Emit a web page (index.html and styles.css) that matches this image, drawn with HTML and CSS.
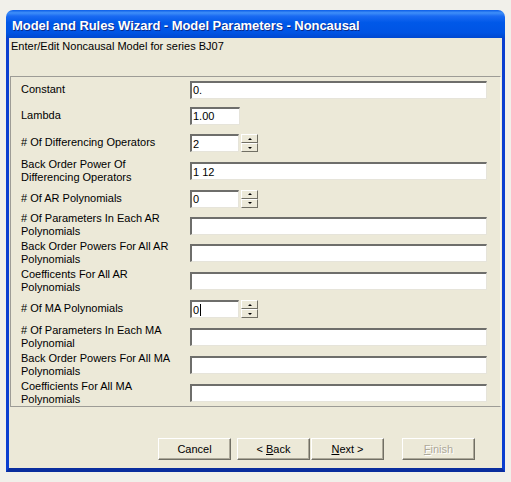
FILE: index.html
```html
<!DOCTYPE html>
<html>
<head>
<meta charset="utf-8">
<title>Model and Rules Wizard</title>
<link rel="stylesheet" href="styles.css">
</head>
<body>
<div class="window">
  <div class="titlebar"><span class="title">Model and Rules Wizard - Model Parameters - Noncausal</span></div>
  <div class="client">
    <div class="subtitle">Enter/Edit Noncausal Model for series BJ07</div>
    <div class="panel">
      <div class="grid">
        <div class="label">Constant</div>
        <div class="cell"><div class="field wide">0.</div></div>

        <div class="label">Lambda</div>
        <div class="cell"><div class="field short">1.00</div></div>

        <div class="label"># Of Differencing Operators</div>
        <div class="cell"><div class="field spin">2</div><div class="spinner"><div class="sbtn"><span class="up"></span></div><div class="sbtn"><span class="down"></span></div></div></div>

        <div class="label">Back Order Power Of<br>Differencing Operators</div>
        <div class="cell"><div class="field wide">1 12</div></div>

        <div class="label"># Of AR Polynomials</div>
        <div class="cell"><div class="field spin">0</div><div class="spinner"><div class="sbtn"><span class="up"></span></div><div class="sbtn"><span class="down"></span></div></div></div>

        <div class="label"># Of Parameters In Each AR<br>Polynomials</div>
        <div class="cell"><div class="field wide"></div></div>

        <div class="label">Back Order Powers For All AR<br>Polynomials</div>
        <div class="cell"><div class="field wide"></div></div>

        <div class="label">Coefficents For All AR<br>Polynomials</div>
        <div class="cell"><div class="field wide"></div></div>

        <div class="label"># Of MA Polynomials</div>
        <div class="cell"><div class="field spin"><span>0</span><span class="caret"></span></div><div class="spinner"><div class="sbtn"><span class="up"></span></div><div class="sbtn"><span class="down"></span></div></div></div>

        <div class="label"># Of Parameters In Each MA<br>Polynomial</div>
        <div class="cell"><div class="field wide"></div></div>

        <div class="label">Back Order Powers For All MA<br>Polynomials</div>
        <div class="cell"><div class="field wide"></div></div>

        <div class="label">Coefficients For All MA<br>Polynomials</div>
        <div class="cell"><div class="field wide"></div></div>
      </div>
    </div>
    <div class="buttons">
      <div class="btn"><span>Cancel</span></div>
      <div class="btn gap-s"><span>&lt; <u>B</u>ack</span></div>
      <div class="btn gap-xs"><span><u>N</u>ext &gt;</span></div>
      <div class="btn gap-l disabled"><span><u>F</u>inish</span></div>
    </div>
  </div>
</div>
</body>
</html>
```

FILE: styles.css
```css
html, body {
  margin: 0;
  padding: 0;
}
body {
  background: #f1f0ea;
  width: 511px;
  height: 482px;
  overflow: hidden;
  font-family: "Liberation Sans", Arial, sans-serif;
  font-size: 11px;
  color: #000;
}
.window {
  margin: 10px 0 0 6px;
  width: 499px;
  height: 462px;
  display: flex;
  flex-direction: column;
}
.titlebar {
  height: 28px;
  box-sizing: border-box;
  border-radius: 7px 7px 0 0;
  background: linear-gradient(to bottom, #0a5ce8 0%, #3f8ff8 10%, #1a6af2 22%, #0058e8 45%, #0054e4 80%, #0048d0 100%);
  display: flex;
  align-items: center;
  padding: 3px 0 0 6px;
}
.title {
  color: #fff;
  font-weight: bold;
  font-size: 13px;
  letter-spacing: -0.05px;
  text-shadow: 1px 1px 0 #0a2a8a;
}
.client {
  flex: 1;
  background: #ece9d8;
  border-left: 3px solid #0b3ed0;
  border-right: 3px solid #0b3ed0;
  border-bottom: 4px solid #0a2d9e;
  display: flex;
  flex-direction: column;
}
.subtitle {
  height: 38px;
  box-sizing: border-box;
  padding: 2px 0 0 2px;
  line-height: 13px;
}
.panel {
  margin: 0 1px 0 1px;
  height: 331px;
  box-sizing: border-box;
  border-top: 1px solid #9d9c96;
  border-left: 1px solid #9d9c96;
  border-bottom: 1px solid #9d9c96;
  border-right: 1px solid #f6f5f0;
  overflow: hidden;
  padding-left: 10px;
}
.grid {
  display: grid;
  grid-template-columns: 169px 1fr;
  grid-template-rows: 25px 27px 28px 28px 27px 27px 28px 28px 28px 28px 28px 28px;
  align-items: center;
}
.label {
  line-height: 13px;
  white-space: nowrap;
  margin-top: -1px;
}
.cell {
  display: flex;
  align-items: center;
}
.field {
  height: 18px;
  box-sizing: border-box;
  background: #fff;
  border-top: 2px solid #6e6e6b;
  border-left: 2px solid #6e6e6b;
  border-bottom: 1px solid #e6e4da;
  border-right: 1px solid #e6e4da;
  padding: 1px 0 0 1px;
  line-height: 13px;
  display: flex;
  align-items: center;
}
.wide { width: 297px; }
.short { width: 50px; }
.spin { width: 49px; }
.caret {
  display: inline-block;
  width: 1px;
  height: 12px;
  background: #000;
  margin-left: 1px;
}
.spinner {
  margin-left: 2px;
  width: 17px;
  height: 18px;
  display: flex;
  flex-direction: column;
}
.sbtn {
  flex: 1;
  box-sizing: border-box;
  background: #ece9d8;
  border-top: 1px solid #fff;
  border-left: 1px solid #fff;
  border-right: 1px solid #716f64;
  border-bottom: 1px solid #716f64;
  display: flex;
  align-items: center;
  justify-content: center;
}
.up, .down {
  width: 0;
  height: 0;
  border-left: 2px solid transparent;
  border-right: 2px solid transparent;
}
.up { border-bottom: 2px solid #000; }
.down { border-top: 2px solid #000; }
.buttons {
  display: flex;
  padding: 31px 0 0 149px;
}
.btn {
  width: 73px;
  height: 22px;
  box-sizing: border-box;
  background: #ece9d8;
  border-top: 1px solid #fff;
  border-left: 1px solid #fff;
  border-right: 1px solid #716f64;
  border-bottom: 1px solid #716f64;
  box-shadow: inset -1px -1px 0 #aca899;
  display: flex;
  align-items: center;
  justify-content: center;
  line-height: 13px;
}
.gap-s { margin-left: 6px; }
.gap-xs { margin-left: 1px; }
.gap-l { margin-left: 18px; }
.disabled {
  color: #aca899;
  text-shadow: 1px 1px 0 #fff;
}
```
